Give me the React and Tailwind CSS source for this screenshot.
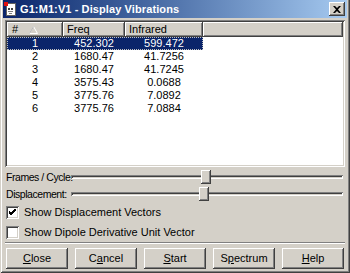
import React from "react";

const ROWS = [
  ["1", "452.302", "599.472"],
  ["2", "1680.47", "41.7256"],
  ["3", "1680.47", "41.7245"],
  ["4", "3575.43", "0.0688"],
  ["5", "3775.76", "7.0892"],
  ["6", "3775.76", "7.0884"],
];

const raised =
  "shadow-[inset_-1px_-1px_#404040,inset_1px_1px_#ffffff,inset_-2px_-2px_#808080,inset_2px_2px_#d4d0c8]";
const sunken =
  "shadow-[inset_1px_1px_#808080,inset_-1px_-1px_#ffffff,inset_2px_2px_#404040,inset_-2px_-2px_#d4d0c8]";

function AppIcon() {
  return (
    <svg width="13" height="14" viewBox="0 0 13 14" className="shrink-0">
      <rect x="2.5" y="1.5" width="9" height="12" fill="#fff" stroke="#606060" />
      <rect x="4" y="6" width="2" height="2" fill="#404040" />
      <rect x="7" y="6" width="2" height="2" fill="#404040" />
      <rect x="4" y="9" width="5" height="1" fill="#808080" />
      <rect x="5" y="11" width="3" height="1" fill="#808080" />
      <rect x="0" y="0" width="4" height="4" fill="#e01010" />
    </svg>
  );
}

function HeaderCell({ w, children }) {
  return (
    <div
      className={`${w} h-[15px] shrink-0 flex items-center px-[4px] bg-[#d4d0c8] shadow-[inset_-1px_-1px_#404040,inset_1px_1px_#ffffff,inset_-2px_-2px_#808080]`}
    >
      {children}
    </div>
  );
}

function Slider({ label, pos }) {
  return (
    <div className="flex items-center h-[17px]">
      <span className="w-[66px] shrink-0 pl-[1px] whitespace-nowrap text-[10.5px] tracking-[-0.45px]">{label}</span>
      <div className="relative flex-1 h-[17px] mr-[2px]">
        <div className="absolute left-0 right-0 top-[6px] h-[4px] shadow-[inset_1px_1px_#808080,inset_-1px_-1px_#ffffff,inset_2px_2px_#404040,inset_-2px_-2px_#d4d0c8]" />
        <div
          className={`absolute top-[1px] w-[10px] h-[14px] bg-[#d4d0c8] ${raised}`}
          style={{ left: pos }}
        />
      </div>
    </div>
  );
}

function Check({ checked, label }) {
  return (
    <div className="flex items-center h-[20px] pl-[1px]">
      <div className={`w-[13px] h-[13px] bg-white ${sunken} flex items-center justify-center`}>
        {checked && (
          <svg width="7" height="7" viewBox="0 0 7 7">
            <path d="M0 2 L2 4 L7 -1 M0 3 L2 5 L7 0 M0 4 L2 6 L7 1" stroke="#000" strokeWidth="1" fill="none" />
          </svg>
        )}
      </div>
      <span className="ml-[5px]">{label}</span>
    </div>
  );
}

function Btn({ children }) {
  return (
    <button
      className={`w-[62px] h-[21px] bg-[#d4d0c8] ${raised} flex items-center justify-center text-black`}
    >
      {children}
    </button>
  );
}

export default function App() {
  return (
    <div
      className="w-[350px] h-[273px] overflow-hidden bg-[#d4d0c8] text-[11px] text-black leading-none flex flex-col px-[3px] pb-[3px] shadow-[inset_1px_0_#d4d0c8,inset_-1px_-1px_#404040,inset_2px_0_#ffffff,inset_-2px_-2px_#808080]"
      style={{ fontFamily: '"Liberation Sans", Arial, sans-serif' }}
    >
      {/* Title bar */}
      <div className="h-[18px] shrink-0 flex items-center bg-gradient-to-r from-[#0a246a] to-[#a6caf0] pl-[1px] pr-[2px]">
        <AppIcon />
        <span className="ml-[3px] font-bold text-white text-[11px] tracking-[0.1px]">
          G1:M1:V1 - Display Vibrations
        </span>
        <div className={`ml-auto w-[16px] h-[14px] bg-[#d4d0c8] ${raised} flex items-center justify-center`}>
          <svg width="8" height="7" viewBox="0 0 8 7">
            <path d="M0 0h2l2 2 2-2h2L5 3.5 8 7H6L4 5 2 7H0l3-3.5z" fill="#000" />
          </svg>
        </div>
      </div>

      <div className="flex-1 flex flex-col px-[2px] pt-[2px]">
        {/* List */}
        <div className={`h-[147px] shrink-0 bg-white p-[2px] ${sunken}`}>
          <div className="flex">
            <HeaderCell w="w-[56px]">
              <span className="ml-[1px]">#</span>
              <svg width="9" height="8" viewBox="0 0 9 8" className="ml-[11px]">
                <path d="M4.5 0.5 L8.5 7.5 H0.5 Z" fill="none" stroke="#ffffff" />
                <path d="M4.5 0.5 L0.5 7.5" fill="none" stroke="#b0b0b0" />
              </svg>
            </HeaderCell>
            <HeaderCell w="w-[62px]">Freq</HeaderCell>
            <HeaderCell w="w-[78px]">Infrared</HeaderCell>
            <HeaderCell w="flex-1">{""}</HeaderCell>
          </div>
          {ROWS.map((r, i) => (
            <div key={i} className="flex h-[13px]">
              <div
                className={`flex w-[196px] ${
                  i === 0
                    ? "bg-[#0a246a] text-white outline outline-1 outline-dotted outline-[#c0c0c0] -outline-offset-1"
                    : ""
                }`}
              >
                <span className="w-[56px] text-center leading-[13px]">{r[0]}</span>
                <span className="w-[62px] text-center leading-[13px]">{r[1]}</span>
                <span className="w-[78px] text-center leading-[13px]">{r[2]}</span>
              </div>
            </div>
          ))}
        </div>

        {/* Sliders */}
        <div className="mt-[2px] flex flex-col">
          <Slider label="Frames / Cycle:" pos={130} />
          <Slider label="Displacement:" pos={128} />
        </div>

        {/* Checkboxes */}
        <div className="-mt-[1px] flex flex-col">
          <Check checked label="Show Displacement Vectors" />
          <Check label="Show Dipole Derivative Unit Vector" />
        </div>

        {/* Separator */}
        <div className="h-[2px] border-t border-[#808080] border-b border-b-white" />

        {/* Buttons */}
        <div className="mt-[4px] flex justify-between pl-[1px] pr-[1px]">
          <Btn>
            <span className="underline">C</span>lose
          </Btn>
          <Btn>
            C<span className="underline">a</span>ncel
          </Btn>
          <Btn>
            <span className="underline">S</span>tart
          </Btn>
          <Btn>
            S<span className="underline">p</span>ectrum
          </Btn>
          <Btn>
            <span className="underline">H</span>elp
          </Btn>
        </div>
      </div>
    </div>
  );
}
